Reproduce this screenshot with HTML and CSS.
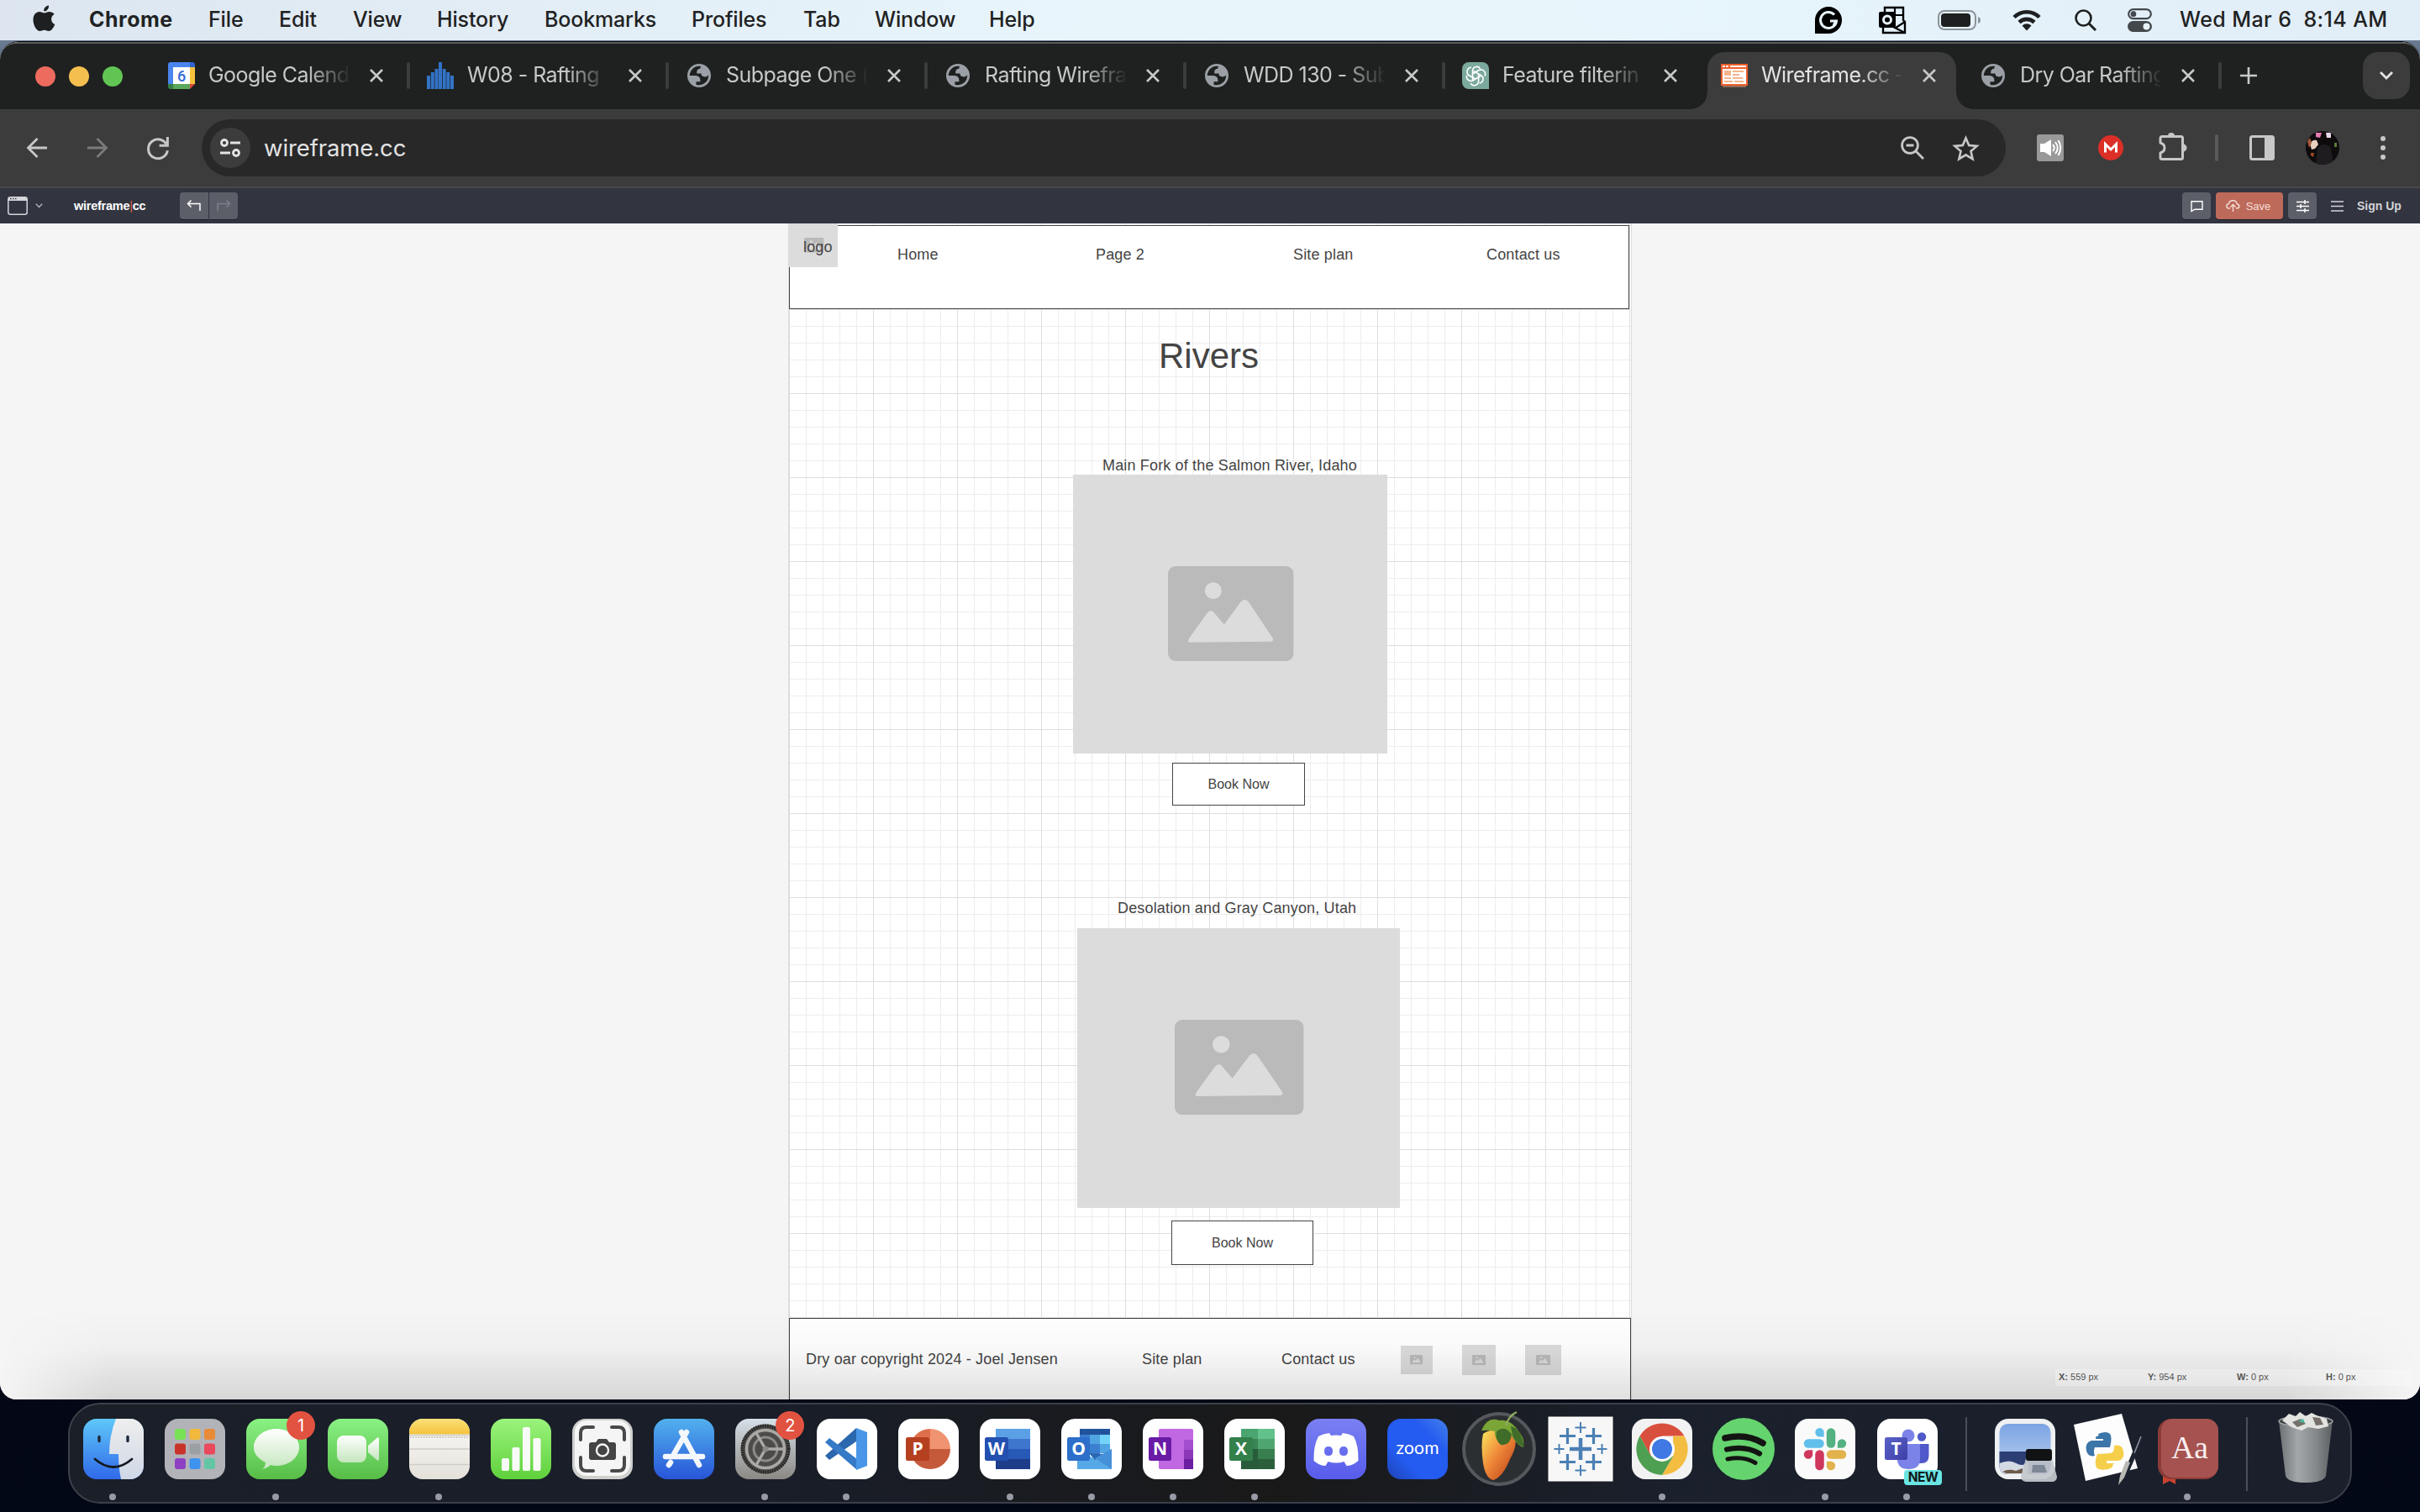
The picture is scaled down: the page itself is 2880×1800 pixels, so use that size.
FILE: index.html
```html
<!DOCTYPE html>
<html lang="en">
<head>
<meta charset="utf-8">
<title>Wireframe.cc</title>
<link rel="stylesheet" href="styles.css">
</head>
<body>
<svg class="defs" width="0" height="0">
  <defs>
    <linearGradient id="gFinder" x1="0" y1="0" x2="0" y2="1"><stop offset="0" stop-color="#5fc8f8"/><stop offset="1" stop-color="#3069ea"/></linearGradient>
    <linearGradient id="gFace" x1="0" y1="0" x2="0" y2="1"><stop offset="0" stop-color="#eeeeee"/><stop offset="1" stop-color="#cfd8e6"/></linearGradient>
    <linearGradient id="gGreen" x1="0" y1="0" x2="0" y2="1"><stop offset="0" stop-color="#8af184"/><stop offset="1" stop-color="#57bd47"/></linearGradient>
    <linearGradient id="gGreen2" x1="0" y1="0" x2="0" y2="1"><stop offset="0" stop-color="#9bf37c"/><stop offset="1" stop-color="#5fd13c"/></linearGradient>
    <linearGradient id="gWhite" x1="0" y1="0" x2="0" y2="1"><stop offset="0" stop-color="#ffffff"/><stop offset="1" stop-color="#c4e6bd"/></linearGradient>
    <linearGradient id="gYellow" x1="0" y1="0" x2="0" y2="1"><stop offset="0" stop-color="#fbe07a"/><stop offset="1" stop-color="#f5c33b"/></linearGradient>
    <linearGradient id="gPaper" x1="0" y1="0" x2="0" y2="1"><stop offset="0" stop-color="#fbfaf8"/><stop offset="1" stop-color="#e4e1da"/></linearGradient>
    <linearGradient id="gStore" x1="0" y1="0" x2="0" y2="1"><stop offset="0" stop-color="#52b1ee"/><stop offset="1" stop-color="#2855d8"/></linearGradient>
    <linearGradient id="gSettings" x1="0" y1="0" x2="0" y2="1"><stop offset="0" stop-color="#d6e0e8"/><stop offset="1" stop-color="#8b8884"/></linearGradient>
    <linearGradient id="gDiscord" x1="0" y1="0" x2="0" y2="1"><stop offset="0" stop-color="#7a80f2"/><stop offset="1" stop-color="#565cea"/></linearGradient>
    <linearGradient id="gZoom" x1="1" y1="0" x2="0" y2="1"><stop offset="0" stop-color="#4680ea"/><stop offset=".3" stop-color="#245bf0"/><stop offset=".7" stop-color="#245bf0"/><stop offset="1" stop-color="#1d44b4"/></linearGradient>
    <linearGradient id="gFruit" x1="0" y1="0" x2="1" y2="1"><stop offset="0" stop-color="#fbe85c"/><stop offset=".45" stop-color="#f08a3a"/><stop offset="1" stop-color="#b83a14"/></linearGradient>
    <linearGradient id="gTrash" x1="0" y1="0" x2="1" y2="0"><stop offset="0" stop-color="#6e7174"/><stop offset=".35" stop-color="#a4a7a9"/><stop offset=".7" stop-color="#85888a"/><stop offset="1" stop-color="#5c5f62"/></linearGradient>
    <linearGradient id="gSky" x1="0" y1="0" x2="0" y2="1"><stop offset="0" stop-color="#7ba3e4"/><stop offset="1" stop-color="#c0d4f0"/></linearGradient>
    <linearGradient id="gTeams" x1="0" y1="0" x2="1" y2="1"><stop offset="0" stop-color="#5a62c8"/><stop offset="1" stop-color="#3f3fa8"/></linearGradient>
    <symbol id="globe" viewBox="2 2 20 20">
      <path fill="#9aa0a6" fill-rule="evenodd" d="M12 2a10 10 0 1 0 0 20 10 10 0 0 0 0-20ZM4 12h4.400c3.407.022 4.922 1.730 4.543 5.127H9.488v2.470a8.004 8.004 0 0 0 10.498-8.083C19.327 12.504 18.332 13 17 13c-2.137 0-3.206-.916-3.206-2.750h-3.748c-.274-2.728.683-4.092 2.870-4.092 0-.975.327-1.597.811-1.970A8.004 8.004 0 0 0 4 12Z"/>
    </symbol>
    <symbol id="close" viewBox="0 0 16 16"><path d="M1 1 15 15M15 1 1 15" stroke="currentColor" stroke-width="2.600" fill="none"/></symbol>
    <symbol id="picture" viewBox="0 0 150 112" preserveAspectRatio="none">
      <rect width="150" height="112" rx="9" fill="#bababa"/>
      <circle cx="54" cy="29" r="10" fill="#dcdcdc"/>
      <path d="M25 90c-2-1 0-4 1-6L47 55q5-5 9 1l11 13 20-27q5-5 9 0l29 43c1 2 0 4-2 4Z" fill="#dcdcdc"/>
    </symbol>
  </defs>
</svg>

<header class="menubar">
  <svg class="apple" viewBox="0 0 27 32"><path d="M19.500 8c-2.600 0-4 1.500-5.700 1.500C12 9.500 10.300 8 7.800 8 4 8 .5 11.500.5 17.500.5 24 4.600 31 8.300 31c2 0 3-1.300 5.500-1.300S17 31 19 31c3.300 0 6-4.500 7.300-8-5.400-2.200-5.500-9.800-.6-12.300C24.200 8.800 21.800 8 19.500 8ZM19 .5c-3.500.4-6.200 3.500-5.700 7C16.700 7.600 19.500 4 19 .5Z" fill="#1d1f20"/></svg>
  <nav class="menus"><b>Chrome</b><span>File</span><span>Edit</span><span>View</span><span>History</span><span>Bookmarks</span><span>Profiles</span><span>Tab</span><span>Window</span><span>Help</span></nav>
  <div class="status">
    <svg width="32" height="32" viewBox="0 0 32 32"><path d="M16 0a16 16 0 1 1 0 32H0V16A16 16 0 0 1 16 0Z" fill="#000"/><path d="M23 9.500A9.500 9.500 0 1 0 25.500 17H18M25.500 17l-3.500 5" fill="none" stroke="#e8f4fa" stroke-width="3"/></svg>
    <svg width="32" height="32" viewBox="0 0 32 32"><path d="M7 6V1h22v15l2 2v13H5v-6" fill="none" stroke="#000" stroke-width="2.400"/><path d="M18 10h11M19 1v8M17 24l14 7M31 18 20 25" fill="none" stroke="#000" stroke-width="2.200"/><rect y="6" width="20" height="19" rx="2" fill="#000"/><circle cx="10" cy="15.500" r="4.500" fill="none" stroke="#e8f4fa" stroke-width="3"/></svg>
    <svg width="52" height="24" viewBox="0 0 52 24"><rect x="1" y="1" width="44" height="22" rx="7" fill="none" stroke="#8b9499" stroke-width="2"/><rect x="4" y="4" width="35" height="16" rx="4" fill="#1d1f20"/><path d="M48 8q3 1 3 4t-3 4Z" fill="#8b9499"/></svg>
    <svg width="34" height="26" viewBox="0 0 34 26"><g fill="none" stroke="#1d1f20" stroke-width="4.600"><path d="M2 9.500a21 21 0 0 1 30 0"/><path d="M8 15.500a13 13 0 0 1 18 0"/></g><path d="M11.500 19.500a8 8 0 0 1 11 0L17 25.500Z" fill="#1d1f20"/></svg>
    <svg width="26" height="26" viewBox="0 0 26 26"><circle cx="10.500" cy="10.500" r="9" fill="none" stroke="#1d1f20" stroke-width="2.600"/><path d="m17 17 8 8" stroke="#1d1f20" stroke-width="3"/></svg>
    <svg width="29" height="28" viewBox="0 0 29 28"><rect x="1.200" y="1.200" width="26.600" height="11" rx="5.500" fill="none" stroke="#43484c" stroke-width="2.200"/><circle cx="7" cy="6.700" r="3.400" fill="#43484c"/><rect y="15" width="29" height="13" rx="6.500" fill="#43484c"/><circle cx="22.500" cy="21.500" r="4" fill="#e6f2f9"/></svg>
    <span class="clock">Wed Mar 6&nbsp; 8:14 AM</span>
  </div>
</header>

<main class="window">
  <div class="tabstrip">
    <div class="lights"><i class="red"></i><i class="amber"></i><i class="green"></i></div>
    <div class="tab"><svg class="fav" viewBox="0 0 32 32"><path d="M0 3a3 3 0 0 1 3-3h23v6H6v20H0Z" fill="#4a84ee"/><path d="M26 0h3a3 3 0 0 1 3 3v3h-6Z" fill="#2f64cf"/><path d="M26 6h6v20h-6Z" fill="#f7c23c"/><path d="M6 26h20v6H6Z" fill="#58a75a"/><path d="M0 26h6v6H3a3 3 0 0 1-3-3Z" fill="#377f45"/><path d="M26 26h6l-6 6Z" fill="#e04638"/><path d="M6 6h20v20H6Z" fill="#fff"/><text x="16" y="22.500" text-anchor="middle" font-family="Roboto" font-size="18" font-weight="500" fill="#356bd6">6</text></svg><span class="title">Google Calend</span><svg class="x"><use href="#close"/></svg><i class="sep"></i></div>
    <div class="tab"><svg class="fav" viewBox="0 0 32 32" fill="#3273c6"><path d="M0 16h4v16H0zM4.800 12h4v20h-4zM9.500 8h4v24h-4zM14 0h4v32h-4zM18.700 8h4v24h-4zM23.300 12h4v20h-4zM28 16h4v16h-4z"/></svg><span class="title">W08 - Rafting</span><svg class="x"><use href="#close"/></svg><i class="sep"></i></div>
    <div class="tab"><svg class="fav globe"><use href="#globe"/></svg><span class="title">Subpage One (</span><svg class="x"><use href="#close"/></svg><i class="sep"></i></div>
    <div class="tab"><svg class="fav globe"><use href="#globe"/></svg><span class="title">Rafting Wirefra</span><svg class="x"><use href="#close"/></svg><i class="sep"></i></div>
    <div class="tab"><svg class="fav globe"><use href="#globe"/></svg><span class="title">WDD 130 - Sub</span><svg class="x"><use href="#close"/></svg><i class="sep"></i></div>
    <div class="tab"><svg class="fav" viewBox="0 0 32 32"><path d="M8 0h16a8 8 0 0 1 8 8v24H8a8 8 0 0 1-8-8V8a8 8 0 0 1 8-8Z" fill="#7ba99d"/><g fill="none" stroke="#fff" stroke-width="1.600"><path id="petal" d="M12.500 21V10.500a5 5 0 0 1 9-3M12.500 14l7.500-4.500a5.200 5.200 0 0 1 7 7"/><use href="#petal" transform="rotate(120 16 16)"/><use href="#petal" transform="rotate(240 16 16)"/></g></svg><span class="title">Feature filterin</span><svg class="x"><use href="#close"/></svg></div>
    <div class="tab active"><svg class="fav wf" viewBox="0 0 32 28"><rect width="32" height="26" fill="#ee5f2c"/><path d="M2 26h28v2H2z" fill="#8f6a5a"/><path d="M2 2h3v2H2zM6 2h3v2H6zM11 2h19v2H11zM2 6h28v18H2z" fill="#fff"/><path d="M4 8h8v6H4zM14 8h13v2H14zM14 12h8v2h-8zM4 16h8v2H4zM14 16h12v2H14zM4 20h10v2H4zM16 20h11v2H16z" fill="#f5b48c"/></svg><span class="title">Wireframe.cc -</span><svg class="x"><use href="#close"/></svg></div>
    <div class="tab"><svg class="fav globe"><use href="#globe"/></svg><span class="title">Dry Oar Rafting</span><svg class="x"><use href="#close"/></svg><i class="sep"></i></div>
    <svg class="plus" viewBox="0 0 20 20"><path d="M10 0v20M0 10h20" stroke="#c9c9c9" stroke-width="2.600"/></svg>
    <div class="tabmenu"><svg width="16" height="10" viewBox="0 0 16 10"><path d="m1 1 7 7 7-7" fill="none" stroke="#e3e3e3" stroke-width="2.800"/></svg></div>
  </div>

  <div class="toolbar">
    <svg class="tool back" viewBox="0 0 24 24"><path d="M12.500 1 1.500 12l11 11M2 12h22" fill="none" stroke="#c7c7c7" stroke-width="2.800"/></svg>
    <svg class="tool fwd" viewBox="0 0 24 24"><path d="m11.500 1 11 11-11 11M22 12H0" fill="none" stroke="#7b7b7b" stroke-width="2.800"/></svg>
    <svg class="tool" viewBox="0 0 24 24"><path d="M22 9.500A10.600 10.600 0 1 0 22.500 15M22.500 0v9.500H13.500" fill="none" stroke="#c7c7c7" stroke-width="2.800"/></svg>
    <div class="omnibox">
      <div class="siteinfo"><svg width="24" height="22" viewBox="0 0 24 22" fill="none" stroke="#e3e3e3" stroke-width="2.800"><circle cx="5" cy="5" r="3.500"/><path d="M12 5h12M0 17h12"/><circle cx="19" cy="17" r="3.500"/></svg></div>
      <span class="url">wireframe.cc</span>
      <svg class="lens" width="28" height="28" viewBox="0 0 28 28" fill="none" stroke="#c7c7c7" stroke-width="2.800"><circle cx="11" cy="11" r="9.400"/><path d="m17.500 17.500 9.500 9.500M6.500 11h9"/></svg>
      <svg width="33" height="31" viewBox="2 2 20 19"><path d="m22 9.240-7.190-.62L12 2 9.190 8.630 2 9.240l5.460 4.730L5.820 21 12 17.270 18.180 21l-1.630-7.030L22 9.240ZM12 15.400l-3.760 2.270 1-4.280-3.320-2.880 4.380-.38L12 6.100l1.710 4.040 4.380.38-3.320 2.880 1 4.280L12 15.400Z" fill="#c7c7c7"/></svg>
    </div>
    <div class="exts">
      <svg width="32" height="32" viewBox="0 0 32 32"><rect width="32" height="32" rx="3" fill="#999"/><path d="M4 11h5l8-5v20l-8-5H4Z" fill="#fff"/><path d="M19 12q3.500 4 0 8M22 9q5.500 7 0 14M25.500 7q5.500 9 0 18" fill="none" stroke="#fff" stroke-width="2"/></svg>
      <svg width="30" height="30" viewBox="0 0 30 30"><circle cx="15" cy="15" r="15" fill="#dc2f27"/><path d="M8.500 20.500v-10l6.500 6.500 6.500-6.500v10" fill="none" stroke="#fff" stroke-width="3"/></svg>
      <svg width="34" height="36" viewBox="0 0 34 36"><path d="M4 5.500h22.500a2 2 0 0 1 2 2v23a2 2 0 0 1-2 2H4a2 2 0 0 1-2-2V25q5-1.500 5-6t-5-6V7.500a2 2 0 0 1 2-2Z" fill="none" stroke="#c7c7c7" stroke-width="3" stroke-linejoin="round"/><path d="M11 5a4 4 0 0 1 8 0ZM29 14.500a4.500 4.500 0 0 1 0 9Z" fill="#c7c7c7"/></svg>
      <i class="bar"></i>
      <svg width="30" height="30" viewBox="0 0 30 30"><rect x="1.500" y="1.500" width="27" height="27" rx="2" fill="none" stroke="#c7c7c7" stroke-width="3"/><path d="M18 1h11v28H18z" fill="#c7c7c7"/></svg>
      <svg width="40" height="40" viewBox="0 0 40 40"><clipPath id="av"><circle cx="20" cy="20" r="20"/></clipPath><g clip-path="url(#av)"><rect width="40" height="40" fill="#0e0b0d"/><path d="M5 15q3-5 8-4l2 5-4 5-4 1Z" fill="#e9cfc0"/><path d="M2 12l3-4 2 6-3 6Z" fill="#a85a3c"/><path d="M12 2h7l-2 6-5-1Z" fill="#e77bb0"/><path d="M24 2h6v6h-5Z" fill="#ead9e8"/><path d="M34 14h3v5h-3z" fill="#5c7a34"/><path d="M6 26h4l-1 5-3-2Z" fill="#9c4a1c"/><path d="M14 20q8-8 16 0l3 20H12Z" fill="#1f1c20"/></g></svg>
      <svg width="6" height="28" viewBox="0 0 6 28" fill="#c7c7c7"><circle cx="3" cy="3" r="3"/><circle cx="3" cy="14" r="3"/><circle cx="3" cy="25" r="3"/></svg>
    </div>
  </div>

  <div class="appbar">
    <svg class="doc" width="24" height="22" viewBox="0 0 24 22"><rect x=".8" y=".8" width="22.400" height="20.400" rx="2.500" fill="none" stroke="#d5d6d9" stroke-width="1.500"/><path d="M1 1h22v4H1z" fill="#d5d6d9"/><path d="M3 2.500h1.500M6 2.500h1.500M9 2.500h1.500" stroke="#323540" stroke-width="1.500"/></svg>
    <svg class="caret" width="9" height="6" viewBox="0 0 9 6"><path d="m.8.800 3.700 3.700L8.200.8" fill="none" stroke="#b4b6bc" stroke-width="1.300"/></svg>
    <span class="brand">wireframe<em>|</em>cc</span>
    <div class="undo">
      <span class="btn"><svg width="18" height="14" viewBox="0 0 18 14"><path d="M5.500.5 1.500 4.500l4 4M2 4.500h14V13" fill="none" stroke="#fff" stroke-width="1.500"/></svg></span>
      <span class="btn off"><svg width="18" height="14" viewBox="0 0 18 14"><path d="m12.500.5 4 4-4 4M16 4.500H2V13" fill="none" stroke="#7e818a" stroke-width="1.500"/></svg></span>
    </div>
    <div class="actions">
      <span class="btn"><svg width="15" height="13" viewBox="0 0 15 13"><path d="M1 .8h13v9.400H5L1 12.500Z" fill="none" stroke="#fff" stroke-width="1.400"/></svg></span>
      <span class="btn save"><svg width="17" height="14" viewBox="0 0 17 14"><path d="M5 10H3.500Q.8 10 .8 7.300 1 5 3.500 4.500 4 .8 8.500.8q4 0 4.700 4Q16 5.500 16 8q-.500 2-3.500 2H12M8.500 14V6M5.500 8.500l3-3 3 3" fill="none" stroke="#f6dcd6" stroke-width="1.400"/></svg>Save</span>
      <span class="btn"><svg width="15" height="15" viewBox="0 0 15 15"><path d="M0 2.500h15M0 7.500h15M0 12.500h15M10 0v5M5 5v5M10 10v5" stroke="#fff" stroke-width="1.500"/></svg></span>
      <svg class="burger" width="15" height="13" viewBox="0 0 15 13"><path d="M0 1h15M0 6.500h15M0 12h15" stroke="#d2d3d7" stroke-width="1.500"/></svg>
      <span class="signup">Sign Up</span>
    </div>
  </div>

  <div class="canvas">
    <div class="page">
      <div class="box head"></div>
      <div class="ph logo"><svg class="mini"><use href="#picture"/></svg></div>
      <span class="txt logotext">logo</span>
      <span class="txt home">Home</span>
      <span class="txt page2">Page 2</span>
      <span class="txt plan">Site plan</span>
      <span class="txt contact">Contact us</span>
      <h1 class="rivers">Rivers</h1>
      <span class="txt cap1">Main Fork of the Salmon River, Idaho</span>
      <div class="ph pic1"><svg><use href="#picture"/></svg></div>
      <div class="box book1">Book Now</div>
      <span class="txt cap2">Desolation and Gray Canyon, Utah</span>
      <div class="ph pic2"><svg><use href="#picture"/></svg></div>
      <div class="box book2">Book Now</div>
      <div class="box foot"></div>
      <span class="txt copy">Dry oar copyright 2024 - Joel Jensen</span>
      <span class="txt plan2">Site plan</span>
      <span class="txt contact2">Contact us</span>
      <div class="ph s1"><svg><use href="#picture"/></svg></div>
      <div class="ph s2"><svg><use href="#picture"/></svg></div>
      <div class="ph s3"><svg><use href="#picture"/></svg></div>
    </div>
    <div class="shade"></div>
    <div class="coords"><span><b>X:</b> 559 px</span><span><b>Y:</b> 954 px</span><span><b>W:</b> 0 px</span><span><b>H:</b> 0 px</span></div>
  </div>
</main>

<footer class="dock">
  <div class="app run"><svg viewBox="0 0 72 72"><rect width="72" height="72" rx="16" fill="url(#gFinder)"/><path d="M39 0h17a16 16 0 0 1 16 16v40a16 16 0 0 1-16 16H45q-3-14-3-30H31Q31 20 39 0Z" fill="url(#gFace)"/><path d="M19 21.500v5M53 21.500v5" stroke="#1d2a3c" stroke-width="3.400" stroke-linecap="round"/><path d="M14 48q22 19 44 0" fill="none" stroke="#15191f" stroke-width="2.800" stroke-linecap="round"/></svg></div>
  <div class="app"><svg viewBox="0 0 72 72"><rect width="72" height="72" rx="16" fill="#b2b3b8"/><g><rect x="12" y="12" width="13" height="13" rx="3" fill="#78e156"/><rect x="29.500" y="12" width="13" height="13" rx="3" fill="#f2b93e"/><rect x="47" y="12" width="13" height="13" rx="3" fill="#e88b38"/><rect x="12" y="29.500" width="13" height="13" rx="3" fill="#c9342a"/><rect x="29.500" y="29.500" width="13" height="13" rx="3" fill="#9ba0a4"/><rect x="47" y="29.500" width="13" height="13" rx="3" fill="#e9485d"/><rect x="12" y="47" width="13" height="13" rx="3" fill="#8f3fc4"/><rect x="29.500" y="47" width="13" height="13" rx="3" fill="#3d93ee"/><rect x="47" y="47" width="13" height="13" rx="3" fill="#62c6a4"/></g></svg></div>
  <div class="app run"><svg viewBox="0 0 72 72"><rect width="72" height="72" rx="16" fill="url(#gGreen)"/><path d="M36 12c15 0 27 10 27 22S51 56 36 56q-4 0-7-1-4 4-10 5 4-3 4-8Q9 45 9 34c0-12 12-22 27-22Z" fill="url(#gWhite)"/></svg><i class="badge">1</i></div>
  <div class="app"><svg viewBox="0 0 72 72"><rect width="72" height="72" rx="16" fill="url(#gGreen)"/><rect x="11" y="20" width="35" height="32" rx="8" fill="url(#gWhite)"/><path d="M48 32 59 22.500q2-1 2 1v25q0 2-2 1L48 40Z" fill="url(#gWhite)"/></svg></div>
  <div class="app run"><svg viewBox="0 0 72 72"><rect width="72" height="72" rx="16" fill="url(#gPaper)"/><path d="M0 18.500V16A16 16 0 0 1 16 0h40a16 16 0 0 1 16 16v2.500Z" fill="url(#gYellow)"/><path d="M0 19.500h72M0 36h72M0 54.500h72" stroke="#cfcdc8" stroke-width="1.400"/><path d="M1 22h70" stroke="#b9b6b0" stroke-width="1.600" stroke-dasharray="1.600 1.600"/></svg></div>
  <div class="app"><svg viewBox="0 0 72 72"><rect width="72" height="72" rx="16" fill="url(#gGreen2)"/><g fill="#f8fbf7"><rect x="13" y="47" width="9" height="15" rx="2"/><rect x="25.500" y="34" width="9" height="28" rx="2"/><rect x="38" y="10" width="9" height="52" rx="2"/><rect x="50.500" y="23" width="9" height="39" rx="2"/></g></svg></div>
  <div class="app"><svg viewBox="0 0 72 72"><rect width="72" height="72" rx="16" fill="#cfcfce"/><rect x="3" y="2" width="66" height="66" rx="14" fill="#f5f5f5"/><path d="M10 25v-8q0-7 7-7h8M47 10h8q7 0 7 7v8M62 46v9q0 7-7 7h-8M25 62h-8q-7 0-7-7v-9" fill="none" stroke="#48494a" stroke-width="4" stroke-linecap="round"/><path d="M20 31q0-3 3-3h5l3-4h10l3 4h5q3 0 3 3v15q0 3-3 3H23q-3 0-3-3Z" fill="#444"/><circle cx="36" cy="37.500" r="7" fill="none" stroke="#f5f5f5" stroke-width="2.400"/></svg></div>
  <div class="app"><svg viewBox="0 0 72 72"><rect width="72" height="72" rx="16" fill="url(#gStore)"/><g stroke="#f4f8fd" stroke-width="6.500" stroke-linecap="round"><path d="M39 16 24 42M33 16l21 39M14 45h44M20 52l-2 3"/></g></svg></div>
  <div class="app run"><svg viewBox="0 0 72 72"><rect width="72" height="72" rx="16" fill="url(#gSettings)"/><circle cx="36" cy="36" r="29.500" fill="#4f4e4c"/><circle cx="36" cy="36" r="27.500" fill="none" stroke="#222" stroke-width="4" stroke-dasharray="1.400 1.400"/><circle cx="36" cy="36" r="22.500" fill="none" stroke="#aaa9a6" stroke-width="3.500"/><circle cx="36" cy="36" r="19" fill="#4c4b49"/><circle cx="36" cy="36" r="14" fill="none" stroke="#8b8a87" stroke-width="3"/><path d="M36 36h22M36 36 25 17M36 36 25 55" stroke="#aaa9a6" stroke-width="3.400"/><circle cx="36" cy="36" r="3.500" fill="#8b8987"/></svg><i class="badge">2</i></div>
  <div class="app run"><svg viewBox="0 0 72 72"><rect width="72" height="72" rx="16" fill="#fff"/><path d="m10 44 37-33v16L15 49Z" fill="#2b67ac"/><path d="m10 28 5-5 33 25v13Z" fill="#3579c7"/><path d="m47 11 13 5v40l-13 5Z" fill="#4996e8"/></svg></div>
  <div class="app"><svg viewBox="0 0 72 72"><rect width="72" height="72" rx="16" fill="#fff"/><path d="M38 12a24 24 0 0 0-24 24h24Z" fill="#dd6f4c"/><path d="M38 12a24 24 0 0 1 24 24H38Z" fill="#f09371"/><path d="M14 36h48a24 24 0 0 1-48 0Z" fill="#c55a3a"/><rect x="9" y="22" width="28" height="28" rx="2.500" fill="#b5401f"/><text x="23" y="43" class="ltr">P</text></svg></div>
  <div class="app run"><svg viewBox="0 0 72 72"><rect width="72" height="72" rx="16" fill="#fff"/><path d="M19 12h41v12H19z" fill="#5ba0e6"/><path d="M19 24h41v12H19z" fill="#3f76cd"/><path d="M19 36h41v12H19z" fill="#2959b8"/><path d="M19 48h41v12H19z" fill="#1d3d8a"/><rect x="6" y="22" width="28" height="28" rx="2.500" fill="#2350b0"/><text x="20" y="43" class="ltr">W</text></svg></div>
  <div class="app run"><svg viewBox="0 0 72 72"><rect width="72" height="72" rx="16" fill="#fff"/><path d="M22 12h36v7H22z" fill="#21539d"/><path d="M22 19h24v24H22z" fill="#3a7fd0"/><path d="M34 19h12v11H34zM46 30h12v11H46z" fill="#50a4e2"/><path d="M46 19h12v11H46z" fill="#73d3f9"/><path d="M19 36 40 48l20-12v24H19Z" fill="#56a9e6"/><path d="m33 41 19 1-12 7Z" fill="#2a66b0"/><path d="m40 47 20 13V36Z" fill="#468fd9"/><rect x="7" y="22" width="27" height="28" rx="2.500" fill="#2c6ec9"/><text x="20.500" y="43" class="ltr">O</text></svg></div>
  <div class="app run"><svg viewBox="0 0 72 72"><rect width="72" height="72" rx="16" fill="#fff"/><rect x="19" y="12" width="41" height="48" rx="2" fill="#c068e2"/><path d="M49 25h11v12H49z" fill="#a34fcd"/><path d="M49 37h11v11H49z" fill="#8a38b8"/><path d="M49 48h11v12H49z" fill="#6c1fa0"/><rect x="7" y="22" width="27" height="28" rx="2.500" fill="#6a1ba6"/><text x="20.500" y="43" class="ltr">N</text></svg></div>
  <div class="app run"><svg viewBox="0 0 72 72"><rect width="72" height="72" rx="16" fill="#fff"/><path d="M20 12h20v12H20z" fill="#4aa571"/><path d="M40 12h20v12H40z" fill="#63c28c"/><path d="M20 24h20v12H20z" fill="#3a8455"/><path d="M40 24h20v12H40z" fill="#4fa56f"/><path d="M20 36h20v24H20z" fill="#285c3a"/><path d="M40 36h20v12H40z" fill="#387e4f"/><path d="M40 48h20v12H40z" fill="#2b5f3c"/><rect x="6" y="22" width="28" height="28" rx="2.500" fill="#33804a"/><text x="20" y="43" class="ltr">X</text></svg></div>
  <div class="app"><svg viewBox="0 0 72 72"><rect width="72" height="72" rx="16" fill="url(#gDiscord)"/><path d="M28 17q-8 1-13 4Q9 32 9.500 50q7 6 14 6l3-5q10 3 19 0l3 5q7 0 14-6 .5-18-5.500-29-5-3-13-4l-2 3q-6-1-12 0ZM27 33q5 0 5 5.500T27 44t-5-5.500 5-5.500Zm18 0q5 0 5 5.500T45 44t-5-5.500 5-5.500Z" fill="#fff" fill-rule="evenodd"/></svg></div>
  <div class="app"><svg viewBox="0 0 72 72"><rect width="72" height="72" rx="16" fill="url(#gZoom)"/><text x="36" y="42" class="zoomtxt" textLength="51">zoom</text></svg></div>
  <div class="app"><svg viewBox="0 0 72 72"><circle cx="36" cy="36" r="42" fill="#2c2f31" stroke="#55595d" stroke-width="4"/><path d="M17 18q16-11 38 4 3 10-6 26-9 22-20 25-9-2-12-20-3-22 0-35Z" fill="url(#gFruit)"/><path d="M15 14Q22-3 36 2q14-2 24 14 8 10 4 18-10-6-14-16-2 14-13 12-7-8-6-15Q22 13 15 14Z" fill="#7ba536"/><path d="M33 15q10-8 18 4-2 14-13 12-7-6-5-16ZM50 9q12 2 16 25-11-5-14-14Z" fill="#3f6c28"/><path d="M44 8Q48-4 57-8" fill="none" stroke="#8fae5c" stroke-width="2.400"/></svg></div>
  <div class="app"><svg viewBox="0 0 72 72"><rect x="-2" y="-2" width="76" height="76" fill="#f7f7f7" stroke="#fff"/><g stroke="#4b80b4"><path d="M36 23v26M23 36h26" stroke-width="4.500"/><path d="M20.500 11v19M11 20.500h19M51.500 11v19M42 20.500h19M20.500 42v19M11 51.500h19M51.500 42v19M42 51.500h19" stroke-width="3.200"/><path d="M36 4v13M29.500 10.500h13M36 55v13M29.500 61.500h13M10.500 30v12M4.500 36h12M61.500 30v12M55.500 36h12" stroke-width="2"/></g></svg></div>
  <div class="app run"><svg viewBox="0 0 72 72"><rect width="72" height="72" rx="16" fill="#f2f2f2"/><path d="M9.500 20.500a31 31 0 0 1 53 0H36L22.500 44Z" fill="#d94f3d"/><path d="M62.500 20.500A31 31 0 0 1 36 67L49.500 44 49 20.500H36Z" fill="#f3bd42"/><path d="M9.500 20.500 22.500 44q13 8 27 0L36 67A31 31 0 0 1 9.500 20.500Z" fill="#4f9f52"/><circle cx="36" cy="36" r="15" fill="#fff"/><circle cx="36" cy="36" r="12" fill="#4079e3"/></svg></div>
  <div class="app"><svg viewBox="0 0 72 72"><circle cx="36" cy="36" r="37" fill="#65d36e"/><g fill="none" stroke="#131513" stroke-linecap="round"><path d="M14 23q25-6 45 6" stroke-width="7.500"/><path d="M16 36.500q22-5 39 5" stroke-width="6.200"/><path d="M17 48q19-4 33 4.500" stroke-width="5"/></g></svg></div>
  <div class="app run"><svg viewBox="0 0 72 72"><rect width="72" height="72" rx="16" fill="#fafafa"/><g stroke-width="10.500" stroke-linecap="round"><path d="M16 29.500h13.500" stroke="#61bfeb"/><path d="M43 16.500v13" stroke="#54b182"/><path d="M43 42.500h13" stroke="#e2b24c"/><path d="M29.500 42.500V56" stroke="#cf375d"/></g><path d="M29.500 11a5.200 5.200 0 0 1 5.200 5.200v5.200h-5.200a5.200 5.200 0 0 1 0-10.400Z" fill="#61bfeb"/><path d="M61.200 29.500a5.200 5.200 0 0 1-5.200 5.200h-5.200v-5.200a5.200 5.200 0 0 1 10.400 0Z" fill="#54b182"/><path d="M43 61.200a5.200 5.200 0 0 1-5.200-5.200v-5.200H43a5.200 5.200 0 0 1 0 10.400Z" fill="#e2b24c"/><path d="M10.800 42.500a5.200 5.200 0 0 1 5.200-5.200h5.200v5.200a5.200 5.200 0 0 1-10.400 0Z" fill="#cf375d"/></svg></div>
  <div class="app run"><svg viewBox="0 0 72 72"><rect width="72" height="72" rx="16" fill="#fff"/><circle cx="37" cy="20" r="7.500" fill="#7b83e8"/><circle cx="53" cy="21.500" r="5.200" fill="#5059c9"/><path d="M42 30h19.500v14q0 9-9 9H44Z" fill="#5059c9"/><path d="M24 30h27v18q0 12-13.500 12T24 48Z" fill="#7b83e8"/><rect x="9" y="22" width="27" height="27" rx="2.500" fill="url(#gTeams)"/><text x="22.500" y="42.500" class="ltr">T</text></svg><b class="new">NEW</b></div>
  <i class="rule"></i>
  <div class="app"><svg viewBox="0 0 72 72"><rect width="72" height="72" rx="16" fill="#eef0f2"/><rect x="5.500" y="6" width="61" height="60" rx="10" fill="url(#gSky)"/><path d="M5.500 39h61v17q0 10-10 10h-41q-10 0-10-10Z" fill="#2c3f74"/><path d="M5.500 53q12-5 20 0t14-2v15h-24q-10 0-10-10Z" fill="#d4dae4"/><path d="M9 63q8-4 16-1l8-3v6H14Z" fill="#6e5a48"/><path d="M37 47h31l6 22q0 5-5 6H37q-6-1-6-6Z" fill="#c3c8ce" opacity=".93"/><path d="M45 55h14l3 9H44Z" fill="#7d8795"/><rect x="37" y="36" width="31" height="14" rx="3" fill="#111214"/></svg></div>
  <div class="app"><svg viewBox="0 0 72 72"><path d="M-3 7 54-6l19 65-62 15Z" fill="#fdfdfd"/><path d="M26 18q10-4 14 0 3 3 0 16H22q-2 5 0 10-8 2-10-6-2-10 6-12h14v-2h-9q0-4 3-6Z" fill="#3c75a8"/><path d="M38 60q-11 2-14-2-3-6 1-16l16-1q5-2 4-9 9-2 11 6 2 10-6 12H36v3h9q0 5-7 7Z" fill="#f6cf4a"/><circle cx="24.500" cy="19" r="2" fill="#fff"/><circle cx="45" cy="56" r="2" fill="#fff"/><path d="m77 23-18 42" stroke="#1d2230" stroke-width="5.500" stroke-linecap="round"/><path d="m77 21-8 20" stroke="#8d93a0" stroke-width="1.500"/><path d="m59 50 5 2-7 18-7 9 2-11Z" fill="#b9b9b4"/></svg></div>
  <div class="app run"><svg viewBox="0 0 72 72"><path d="M6 68h15v10l-7-4-8 4Z" fill="#c8432f"/><rect width="72" height="72" rx="16" fill="#8a3c38"/><rect x="4" width="68" height="70" rx="14" fill="#a65250"/><text x="38" y="47" class="aa" textLength="44" lengthAdjust="spacingAndGlyphs">Aa</text></svg></div>
  <i class="rule"></i>
  <div class="app bin"><svg viewBox="0 0 72 72"><path d="M4 2 68 2 60 68q-3 8-24 8T12 68Z" fill="url(#gTrash)"/><ellipse cx="36" cy="3" rx="32" ry="6" fill="#3f4346" stroke="#a4a7a9" stroke-width="1.500"/><path d="m8 2 8-8 8 3 5-5 7 5 7-4 6 3 12 4 2 9-12 3-12-2-8 4-12-4Z" fill="#e3e3e1"/><path d="m20 4 10-4 6 6-10 4ZM44-2l9 1 4 8-9 1Z" fill="#77706a"/><path d="m27 3 6-3 2 5Z" fill="#46b99c"/></svg></div>
</footer>
</body>
</html>
```
FILE: styles.css
```css
* { box-sizing: border-box; }
body { margin: 0; width: 2880px; height: 1800px; overflow: hidden; background: linear-gradient(#8b9bb0 0, #5d6d85 70px, #02050e 120px, #030817 100%); font-family: Inter, sans-serif; display: flex; flex-direction: column; }
.defs { position: absolute; }
svg { display: block; flex: none; overflow: visible; }
i { font-style: normal; }

.menubar { height: 48px; flex: none; display: flex; align-items: center; padding-left: 39px; background: linear-gradient(90deg, #dde6f0, #e8f5fb 45%, #e8f6fc 65%, #e1edf7); color: #1f2223; font-size: 25px; line-height: 46px; white-space: nowrap; }
.apple { width: 27px; height: 32px; margin-top: -5px; }
.menus { display: grid; height: 48px; margin-left: 40px; grid-template-columns: 142px 84px 88px 100px 128px 175px 133px 85px 136px 70px; font-weight: 450; letter-spacing: -0.15px; }
.menus b { font-weight: 700; letter-spacing: 0.5px; }
.status { margin-left: auto; display: flex; align-items: center; width: 720px; }
.status svg:nth-child(2) { margin-left: 44px; }
.status svg:nth-child(3) { margin-left: 38px; }
.status svg:nth-child(4) { margin-left: 37px; }
.status svg:nth-child(5) { margin-left: 40px; }
.status svg:nth-child(6) { margin-left: 37px; }
.clock { margin: 0 0 2px 33px; letter-spacing: 0.4px; font-weight: 450; }

.window { height: 1617px; margin-top: 1px; flex: none; border-radius: 22px 22px 20px 20px; overflow: hidden; background: #f5f5f5; display: flex; flex-direction: column; border-top: 1px solid #050606; }
.tabstrip { height: 80px; flex: none; background: #1f2120; display: flex; border-top: 2px solid #5b5e5d; border-radius: 20px 20px 0 0; padding-top: 10px; }
.lights { width: 184px; flex: none; display: flex; gap: 16px; padding: 17px 0 0 42px; }
.lights i { width: 24px; height: 24px; border-radius: 50%; }
.red { background: #ed6a5e; }
.amber { background: #f4bf4f; }
.green { background: #61c554; }
.tab { width: 308px; height: 68px; flex: none; display: flex; align-items: center; padding-left: 16px; color: #c7c9c8; padding-bottom: 12px; position: relative; }
.fav { width: 32px; height: 32px; }
.fav.globe { width: 28px; height: 28px; margin: 0 2px; }
.fav.wf { height: 28px; }
.title { margin: -2px 0 0 16px; width: 167px; font-size: 25px; line-height: 40px; white-space: nowrap; overflow: hidden; letter-spacing: -0.55px; -webkit-mask-image: linear-gradient(90deg, #000 118px, transparent 170px); mask-image: linear-gradient(90deg, #000 118px, transparent 170px); }
.x { width: 16px; height: 16px; margin-left: 25px; color: #c7c9c8; }
.sep { width: 4px; height: 32px; border-radius: 2px; background: #3b3d3c; margin-left: 28px; }
.active { background: #3c3c3c; border-radius: 20px 20px 0 0; width: 296px; margin-right: 12px; color: #e3e3e3; }
.active::before, .active::after { content: ""; position: absolute; bottom: 0; width: 20px; height: 20px; }
.active::before { left: -20px; background: radial-gradient(circle at 0 0, transparent 19.5px, #3c3c3c 20px); }
.active::after { right: -20px; background: radial-gradient(circle at 100% 0, transparent 19.5px, #3c3c3c 20px); }
.plus { width: 20px; height: 20px; margin: 18px 0 0 18px; }
.tabmenu { width: 56px; height: 56px; border-radius: 18px; background: #3c3c3c; margin: 0 12px 0 auto; display: flex; align-items: center; justify-content: center; }

.toolbar { height: 94px; flex: none; display: flex; align-items: center; background: #3c3c3c; border-bottom: 2px solid #484848; padding-left: 32px; }
.tool { width: 24px; height: 24px; margin-right: 48px; }
.tool:nth-child(3) { width: 26px; height: 26px; margin: 0 39px 0 -1px; }
.omnibox { width: 2147px; height: 68px; border-radius: 34px; background: #282828; display: flex; align-items: center; padding: 0 31px 0 10px; }
.siteinfo { width: 48px; height: 48px; border-radius: 50%; background: #3c3c3c; display: flex; align-items: center; justify-content: center; }
.url { margin-left: 16px; font-size: 27.500px; color: #e3e3e3; letter-spacing: -0.1px; }
.lens { margin: 0 33px 0 auto; }
.exts { display: flex; align-items: center; margin-left: 37px; }
.exts > :nth-child(2) { margin-left: 41px; }
.exts > :nth-child(3) { margin: -3px 0 0 42px; }
.bar { width: 4px; height: 32px; background: #5a5a5a; border-radius: 2px; margin-left: 33px; }
.exts > :nth-child(5) { margin-left: 37px; }
.exts > :nth-child(6) { margin-left: 37px; }
.exts > :nth-child(7) { margin-left: 49px; }

.appbar { height: 42px; flex: none; background: #323540; display: flex; align-items: center; padding: 0 23px 0 9px; color: #fff; }
.caret { margin-left: 9px; }
.brand { margin-left: 37px; width: 126px; font: bold 14.500px "Liberation Sans", sans-serif; letter-spacing: -0.25px; }
.brand em { color: #e0604a; font-style: normal; font-weight: normal; }
.undo { display: flex; gap: 1px; }
.btn { width: 34px; height: 32px; border-radius: 4px; background: #5c5f68; box-shadow: 0 1px 0 #1e2027; display: flex; align-items: center; justify-content: center; }
.undo .btn:first-child { border-radius: 4px 0 0 4px; }
.undo .off { border-radius: 0 4px 4px 0; }
.actions { margin-left: auto; display: flex; align-items: center; gap: 6px; font: 14px "Liberation Sans", sans-serif; }
.save { width: 80px; background: #bd6a5a; gap: 7px; color: #f6dcd6; font-size: 13px; padding-right: 3px; }
.burger { margin-left: 11px; }
.signup { width: 52px; margin-left: 10px; color: #d2d3d7; font-weight: bold; font-size: 14px; white-space: nowrap; }

/* Wireframe canvas: every element is placed freely on the page */
.canvas { height: 1400px; flex: none; position: relative; padding-left: 938px; background: #f5f5f5; }
.page { position: relative; width: 1004px; height: 1400px; border: 1px solid #ddd; border-width: 0 1px; color: #444; font-family: "Liberation Sans", sans-serif;
  background-color: #fff;
  background-image: linear-gradient(90deg, #dedede 1px, transparent 1px), linear-gradient(#dedede 1px, transparent 1px), linear-gradient(90deg, #ededed 1px, transparent 1px), linear-gradient(#ededed 1px, transparent 1px);
  background-size: 100px 100px, 100px 100px, 20px 20px, 20px 20px;
  background-position: 0 2px; }
.box, .ph, .txt, .rivers { position: absolute; }
.box { border: 1px solid #444; background: #fff; display: flex; align-items: center; justify-content: center; font-size: 16px; }
.ph { background: #dcdcdc; display: flex; align-items: center; justify-content: center; }
.ph svg { width: 40%; height: 34%; margin: -1px 0 0 2px; }
.txt { font-size: 18px; line-height: 20px; white-space: nowrap; letter-spacing: 0.16px; }
.head { left: 0; top: 2px; width: 1000px; height: 100px; }
.logo { left: -1px; top: 0; width: 59px; height: 52px; }
.logotext { left: 17px; top: 18px; }
.home { left: 129px; top: 27px; }
.page2 { left: 365px; top: 27px; }
.plan { left: 600px; top: 27px; }
.contact { left: 830px; top: 27px; }
.rivers { left: 440px; top: 134px; margin: 0; font-size: 42px; line-height: 48px; font-weight: normal; }
.cap1 { left: 373px; top: 278px; }
.pic1 { left: 338px; top: 299px; width: 374px; height: 332px; }
.book1 { left: 456px; top: 642px; width: 158px; height: 51px; }
.cap2 { left: 391px; top: 805px; }
.pic2 { left: 343px; top: 839px; width: 384px; height: 333px; }
.book2 { left: 455px; top: 1187px; width: 169px; height: 53px; }
.foot { left: 0; top: 1303px; width: 1002px; height: 110px; }
.copy { left: 20px; top: 1342px; }
.plan2 { left: 420px; top: 1342px; }
.contact2 { left: 586px; top: 1342px; }
.s1 { left: 728px; top: 1336px; width: 38px; height: 34px; }
.s2 { left: 801px; top: 1335px; width: 40px; height: 36px; }
.s3 { left: 876px; top: 1335px; width: 43px; height: 36px; }
.s1 svg, .s2 svg, .s3 svg { margin: 0; }
.shade { position: absolute; left: 0; right: 0; bottom: 0; height: 110px; background: linear-gradient(transparent, rgba(0,0,0,.025) 45%, rgba(0,0,0,.12)); -webkit-mask-image: linear-gradient(90deg, transparent, #000 130px, #000 2720px, transparent); mask-image: linear-gradient(90deg, transparent, #000 130px, #000 2720px, transparent); }
.coords { position: absolute; left: 2446px; top: 1364px; width: 424px; height: 20px; padding-left: 4px; background: rgba(255,255,255,.28); color: #555; display: grid; grid-template-columns: repeat(4, 106px); font: 11px/19px "Liberation Sans", sans-serif; }

.dock { width: 2718px; height: 120px; margin: 4px 0 0 81px; flex: none; border: 2px solid #3c404a; border-radius: 38px; background: linear-gradient(90deg, #1a1f28, #191e29 30%, #191919 53%, #1a202c 70%, #1a1f2b); display: flex; padding: 17px 0 0 3px; }
.app { width: 97.050px; height: 72px; flex: none; padding: 0 12.500px; position: relative; }
.app svg { width: 72px; height: 72px; }
.run::after { content: ""; position: absolute; left: 44px; top: 89px; width: 8px; height: 8px; border-radius: 50%; background: #989ba6; }
.badge { position: absolute; left: 61px; top: -9px; width: 34px; height: 34px; border-radius: 50%; background: #e25241; color: #fff; font-size: 20px; line-height: 34px; text-align: center; }
.new { position: absolute; left: 45px; top: 61px; width: 45px; height: 18px; border-radius: 4px; background: #6be5e4; color: #10191a; font-size: 15.500px; line-height: 18px; text-align: center; letter-spacing: -0.5px; }
.rule { width: 2px; height: 88px; background: #4b4f59; margin: -2px 20px 0 21px; flex: none; }
.ltr { font: bold 21px "Open Sans", sans-serif; fill: #fff; text-anchor: middle; }
.zoomtxt { font: 400 21px Lato, sans-serif; fill: #fff; text-anchor: middle; }
.aa { font: 37px "Liberation Serif", serif; fill: #f7eeee; text-anchor: middle; }
```
